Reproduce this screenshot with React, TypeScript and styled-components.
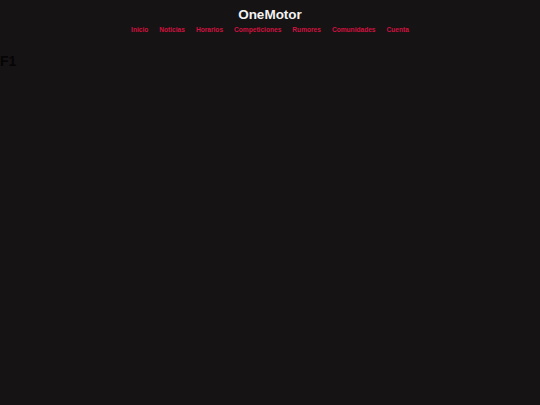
import React from 'react';
import styled, { createGlobalStyle } from 'styled-components';

const GlobalStyle = createGlobalStyle`
  html, body {
    margin: 0;
    padding: 0;
    background: #151314;
    font-family: 'Liberation Sans', Arial, sans-serif;
  }
`;

const Page = styled.div`
  min-height: 405px;
  background: #151314;
`;

const Header = styled.header`
  display: flex;
  flex-direction: column;
  align-items: center;
  padding-top: 7px;
`;

const Title = styled.h1`
  margin: 0;
  font-size: 13.5px;
  font-weight: bold;
  color: #f2f2f2;
  line-height: 16px;
`;

const Nav = styled.nav`
  display: flex;
  gap: 11px;
  margin-top: 3px;
  line-height: 8px;
`;

const NavLink = styled.a`
  font-size: 6.6px;
  font-weight: bold;
  color: #d0123f;
  text-decoration: none;
`;

const Section = styled.h2`
  margin: 19px 0 0;
  font-size: 14px;
  font-weight: bold;
  color: #050505;
`;

const links = ['Inicio', 'Noticias', 'Horarios', 'Competiciones', 'Rumores', 'Comunidades', 'Cuenta'];

const App: React.FC = () => (
  <>
    <GlobalStyle />
    <Page>
      <Header>
        <Title>OneMotor</Title>
        <Nav>
          {links.map((l) => (
            <NavLink key={l} href="#">
              {l}
            </NavLink>
          ))}
        </Nav>
      </Header>
      <Section>F1</Section>
    </Page>
  </>
);

export default App;
